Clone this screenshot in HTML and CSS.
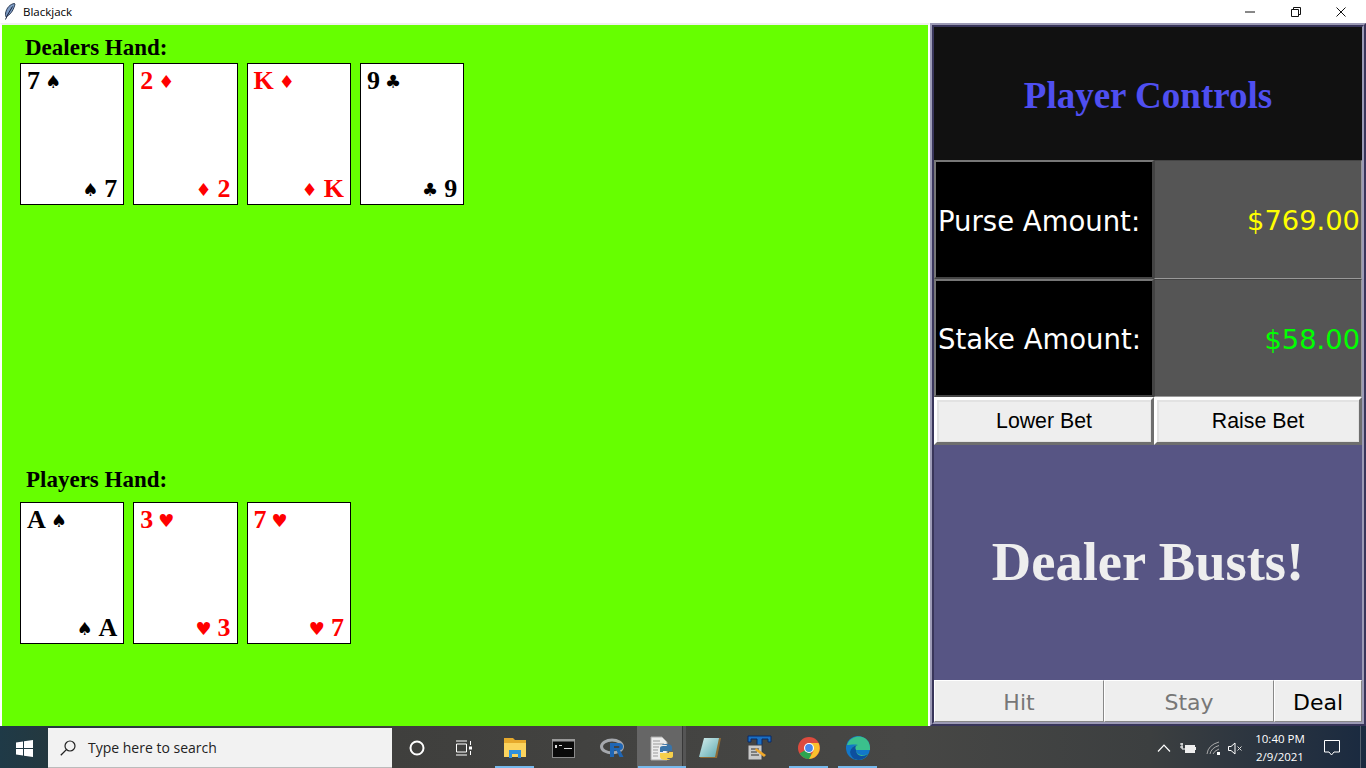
FILE: index.html
```html
<!DOCTYPE html>
<html lang="en">
<head>
<meta charset="utf-8">
<title>Blackjack</title>
<link rel="stylesheet" href="styles.css">
</head>
<body>
<div class="desktop">
  <header class="titlebar">
    <svg class="feather" width="12" height="17" viewBox="0 0 12 17"><path d="M10.500 .5C6 1 2.500 5 1.600 10c-.3 2 0 3.200.6 4l1.800-1.500C7 11 10 6 11 1z" fill="#7d9cc4" stroke="#1c2a44" stroke-width=".9"/><path d="M8.500 3.500 3.500 12 1.500 16.500" fill="none" stroke="#16203a" stroke-width="1"/></svg>
    <span class="title">Blackjack</span>
    <div class="winctl">
      <span class="ctl"><svg width="10" height="10" viewBox="0 0 10 10"><path d="M0 5h10" stroke="#111" fill="none"/></svg></span>
      <span class="ctl"><svg width="10" height="10" viewBox="0 0 10 10"><path d="M.5 2.500h7v7h-7zM2.500 2.500v-2h7v7h-2" stroke="#111" fill="none"/></svg></span>
      <span class="ctl"><svg width="10" height="10" viewBox="0 0 10 10"><path d="M.5 .5l9 9M9.500 .5l-9 9" stroke="#111" fill="none"/></svg></span>
    </div>
  </header>
  <main class="main">
    <section class="board">
      <div class="hand dealer">
        <h2 class="hand-label dealer-label">Dealers Hand:</h2>
        <div class="cards">
          <div class="card"><div class="corner top"><span class="rank">7</span><span class="suit">♠</span></div><div class="corner bottom"><span class="suit">♠</span><span class="rank">7</span></div></div>
          <div class="card red"><div class="corner top"><span class="rank">2</span><span class="suit">♦</span></div><div class="corner bottom"><span class="suit">♦</span><span class="rank">2</span></div></div>
          <div class="card red"><div class="corner top"><span class="rank">K</span><span class="suit">♦</span></div><div class="corner bottom"><span class="suit">♦</span><span class="rank">K</span></div></div>
          <div class="card"><div class="corner top"><span class="rank">9</span><span class="suit">♣</span></div><div class="corner bottom"><span class="suit">♣</span><span class="rank">9</span></div></div>
        </div>
      </div>
      <div class="hand player">
        <h2 class="hand-label player-label">Players Hand:</h2>
        <div class="cards">
          <div class="card"><div class="corner top"><span class="rank">A</span><span class="suit">♠</span></div><div class="corner bottom"><span class="suit">♠</span><span class="rank">A</span></div></div>
          <div class="card red"><div class="corner top"><span class="rank">3</span><span class="suit">♥</span></div><div class="corner bottom"><span class="suit">♥</span><span class="rank">3</span></div></div>
          <div class="card red"><div class="corner top"><span class="rank">7</span><span class="suit">♥</span></div><div class="corner bottom"><span class="suit">♥</span><span class="rank">7</span></div></div>
        </div>
      </div>
    </section>
    <aside class="panel">
      <div class="panel-inner">
        <h1 class="controls-title">Player Controls</h1>
        <div class="stat-row purse-row">
          <div class="stat-label">Purse Amount:</div>
          <div class="stat-value yellow">$769.00</div>
        </div>
        <div class="stat-row stake-row">
          <div class="stat-label">Stake Amount:</div>
          <div class="stat-value green">$58.00</div>
        </div>
        <div class="bet-row">
          <button class="bet-btn" type="button">Lower Bet</button>
          <button class="bet-btn" type="button">Raise Bet</button>
        </div>
        <div class="message">Dealer Busts!</div>
        <div class="play-row">
          <button class="play-btn wide off" type="button">Hit</button>
          <button class="play-btn wide off" type="button">Stay</button>
          <button class="play-btn deal" type="button">Deal</button>
        </div>
      </div>
    </aside>
  </main>
  <footer class="taskbar">
    <div class="start"><svg width="17" height="17" viewBox="0 0 17 17"><path d="M0 2.400 7 1.400V8H0zM8 1.300 17 0V8H8zM0 9h7v6.600L0 14.600zM8 9h9v8L8 15.700z" fill="#fff"/></svg></div>
    <div class="search">
      <svg width="16" height="16" viewBox="0 0 16 16"><circle cx="10" cy="6" r="5" fill="none" stroke="#222" stroke-width="1.200"/><path d="M6.400 9.600 .8 15.200" stroke="#222" stroke-width="1.300"/></svg>
      <span class="search-text">Type here to search</span>
    </div>
    <div class="apps">
      <div class="slot"><svg width="16" height="16" viewBox="0 0 16 16"><circle cx="8" cy="8" r="6.500" fill="none" stroke="#fff" stroke-width="2"/></svg></div>
      <div class="slot shift-left"><svg width="17" height="16" viewBox="0 0 17 16"><path d="M1 1h11M1 15h11M1.500 4h10v8h-10zM15.500 1v4M15.500 11v4" fill="none" stroke="#fff"/><rect x="14" y="6.500" width="3" height="3" fill="#fff"/></svg></div>
      <div class="slot running"><svg width="22" height="20" viewBox="0 0 22 20"><path d="M0 0h9l2 2h11v4H0z" fill="#e6a92c"/><path d="M0 5h22v14H0z" fill="#fbd35d"/><path d="M5 20v-8h12v8h-3v-4H8v4z" fill="#2f8fdc"/></svg></div>
      <div class="slot"><svg width="23" height="19" viewBox="0 0 23 19"><rect x=".5" y=".5" width="22" height="18" fill="#0a0a0a" stroke="#8a8a8a"/><path d="M0 0h23v2.500H0z" fill="#9a9a9a"/><path d="M3 6h2v3H3zM7 6h3v1H7zM12 9h8v1h-8z" fill="#ddd"/></svg></div>
      <div class="slot"><svg width="25" height="20" viewBox="0 0 25 20"><ellipse cx="12" cy="8.500" rx="10.500" ry="6.500" fill="none" stroke="#a5a8ad" stroke-width="3"/><path d="M10 5h9q4 0 4 3.500t-3 3.500l3.500 7h-4L16.500 12.500H14V19h-4zM14 8v2h4.500q1 0 1-1t-1-1z" fill="#1f66b5"/></svg></div>
      <div class="slot active running"><svg width="24" height="25" viewBox="0 0 24 25"><path d="M1 1h11l5 5v18H1z" fill="#ececec" stroke="#aaa"/><path d="M3 5h7M3 8h11M3 11h6M3 14h5M3 17h5M3 20h5" stroke="#999"/><path d="M16 8q6 0 6 3v4h-9v1h-3v-4q0-2 3-2h4v-1h-5q0-1 4-1z" fill="#3a74a8"/><path d="M16 24q-6 0-6-3v-4h9v-1h4v4q0 2-3 2h-3v1h3q0 1-4 1z" fill="#f6cf4a"/></svg></div>
      <div class="slot"><svg width="23" height="22" viewBox="0 0 23 22"><defs><linearGradient id="pad" x1="0" y1="0" x2="1" y2="1"><stop offset="0" stop-color="#d5efee"/><stop offset="1" stop-color="#5fa9b0"/></linearGradient></defs><path d="M6 1h16l-4 20H1z" fill="#8f6a35"/><path d="M5 1h15l-4 19H0z" fill="url(#pad)"/></svg></div>
      <div class="slot"><svg width="25" height="26" viewBox="0 0 25 26"><path d="M1 1h23v6h-3V4h-6v14h-5V4H4v3H1z" fill="#1a6fc4" stroke="#0b2a66"/><rect x="1" y="10" width="14" height="15" fill="#c9c9c9" stroke="#444"/><path d="M4 14h8M4 17h6M4 20h8" stroke="#333"/><path d="M9 13l10 7-2 2-9-7z" fill="#f0a82a"/></svg></div>
      <div class="slot running"><svg width="22" height="22" viewBox="0 0 22 22"><circle cx="11" cy="11" r="11" fill="#dd4b3e"/><path d="M11 11 1.500 16.500A11 11 0 0 0 14 21.600z" fill="#2ea44f"/><path d="M11 6h9.500A11 11 0 0 1 11 22l4.500-8z" fill="#fbc02d"/><circle cx="11" cy="11" r="5" fill="#fff"/><circle cx="11" cy="11" r="3.900" fill="#4a86e8"/></svg></div>
      <div class="slot running"><svg width="24" height="24" viewBox="0 0 24 24"><circle cx="12" cy="12" r="12" fill="#1277c9"/><path d="M1 9C3 2 10 0 14 .5 20 1 24 6 24 12v2H10q0 4 5 5 4 .5 7-1-3 6-10 6c-6-1-8-6-7-10 .5-3 4-5 7-5-4-1-8 0-11 0z" fill="#3bc08c"/><path d="M10 14q0 5 5.500 6 3.500 0 6.500-2-3 6-10 6-7-1-8-8 1-6 8-7-4 1-2 5z" fill="#0d4f9e"/></svg></div>
    </div>
    <div class="tray">
      <svg class="tray-ico chev" width="14" height="8" viewBox="0 0 14 8"><path d="M1 7.500 7 1.200l6 6.300" fill="none" stroke="#fff" stroke-width="1.200"/></svg>
      <svg class="tray-ico batt" width="16" height="10" viewBox="0 0 16 10"><path d="M0 1h3M0 4h3M2 0v6h3" fill="none" stroke="#fff"/><rect x="5" y="2" width="10" height="8" fill="#eee"/><path d="M15 4h1v3h-1z" fill="#eee"/></svg>
      <svg class="tray-ico wifi" width="15" height="14" viewBox="0 0 15 14"><path d="M1 13Q2 4 13 1M4 13q1-6 9-8.500M7 13q1-3 6-5" fill="none" stroke="#aaa"/><rect x="11" y="11" width="3" height="3" fill="#fff"/></svg>
      <svg class="tray-ico vol" width="15" height="13" viewBox="0 0 15 13"><path d="M.5 4.500h2.500L7 1v11L3 8.500H.5z" fill="none" stroke="#fff"/><path d="M9.500 4.500l4 4M13.500 4.500l-4 4" stroke="#ddd" fill="none"/></svg>
      <div class="clock"><span>10:40 PM</span><span>2/9/2021</span></div>
      <svg class="tray-ico notif" width="16" height="16" viewBox="0 0 16 16"><path d="M.5 .5h15v11.500H10L7.500 15 5 12H.5z" fill="none" stroke="#fff"/></svg>
      <span class="show-desktop"></span>
    </div>
  </footer>
</div>
</body>
</html>
```

FILE: styles.css
```css
* { box-sizing: border-box; }
html, body { margin: 0; padding: 0; }
body { width: 1366px; height: 768px; overflow: hidden; background: #fff; font-family: "DejaVu Sans", sans-serif; }
.desktop { width: 1366px; height: 768px; display: flex; flex-direction: column; }

.titlebar { height: 23px; flex: none; display: flex; align-items: center; background: #fff; padding-left: 4px; }
.feather { flex: none; margin-top: -1px; }
.title { margin-left: 7px; font: 11.500px/16px "Open Sans", "Noto Sans", sans-serif; color: #000; }
.winctl { margin-left: auto; margin-right: 2px; display: flex; }
.ctl { width: 45.500px; height: 22px; display: flex; align-items: center; justify-content: center; }

.main { height: 703px; flex: none; display: flex; }
.board { width: 930px; flex: none; border-left: 2px solid #fff; border-right: 2px solid #fff; border-top: 2px solid #f0f0f0; background: #66ff00; padding-left: 18px; }
.hand { display: flex; flex-direction: column; }
.dealer { height: 180px; padding-top: 11px; }
.player { margin-top: 263px; height: 190px; }
.hand-label { margin: 0 0 0 5px; font: bold 23px/24px "Liberation Serif", serif; color: #000; }
.dealer-label { height: 27px; }
.player-label { height: 34px; padding-left: 1px; }
.cards { display: flex; gap: 9px; }
.card { width: 104.300px; height: 142px; border: 1px solid #000; background: #fff; color: #000; display: flex; flex-direction: column; justify-content: space-between; padding: 4px 6px 2px 6px; }
.card.red { color: #f00; }
.corner { display: flex; align-items: center; gap: 5px; height: 26px; }
.corner.bottom { justify-content: flex-end; gap: 6px; }
.rank { font: bold 26px/26px "Liberation Serif", serif; }
.suit { font: 18px/26px "DejaVu Sans", sans-serif; padding-top: 2px; }

.panel { width: 436px; flex: none; border: 2px solid; border-color: #9c9ab5 #38355a #38355a #9c9ab5; }
.panel-inner { height: 100%; border: 2px solid; border-color: #38355a #9c9ab5 #9c9ab5 #38355a; display: flex; flex-direction: column; background: #575584; }
.controls-title { margin: 0; height: 133px; flex: none; background: #111; color: #4f4ff0; display: flex; align-items: center; justify-content: center; padding-top: 4px; font: bold 37px/40px "Liberation Serif", serif; }
.stat-row { flex: none; display: grid; grid-template-columns: 220px 208px; }
.purse-row { height: 119px; }
.stake-row { height: 118px; }
.stat-label { background: #000; color: #fff; border: 2px solid; border-color: #777 #444 #444 #777; display: flex; align-items: center; padding: 2px 0 0 2px; font-size: 27.500px; white-space: nowrap; }
.stat-value { background: #555; border: 1px solid; border-color: #444 #999 #999 #444; display: flex; align-items: center; justify-content: flex-end; padding: 2px 1px 0 0; font-size: 27.300px; }
.yellow { color: #ff0; }
.green { color: #0f0; }

.bet-row { flex: none; height: 48px; display: grid; grid-template-columns: 220px 208px; background: #eee; }
.bet-btn { background: #eee; color: #000; border: 3px solid; border-color: #fff #6e6e6e #6e6e6e #fff; box-shadow: inset 2px 2px 0 #e2e2e2, inset -1px -1px 0 #e2e2e2; font: 21.300px "Liberation Sans", sans-serif; padding: 0; }
.message { flex: 1; display: flex; align-items: center; justify-content: center; background: #575584; color: #eee; font: bold 54.500px/56px "Liberation Serif", serif; padding-bottom: 1px; }
.play-row { flex: none; height: 42px; display: grid; grid-template-columns: 170px 170px 88px; background: #eee; }
.play-btn { background: #eee; border: 1px solid; border-color: #fff #888 #888 #fff; font: 22px "DejaVu Sans", sans-serif; padding: 2px 0 0; color: #000; }
.play-btn.off { color: #777; }

.taskbar { height: 42px; flex: none; display: flex; align-items: stretch; background: linear-gradient(90deg, #1f3a47 0, #24383f 48px, #3f3f3d 392px, #474745 900px, #3c3f40 1150px, #1a2a40 1366px); }
.start { width: 48px; flex: none; display: flex; align-items: center; justify-content: center; padding-top: 2px; }
.search { width: 344px; flex: none; display: flex; align-items: center; background: #f2f2f2; border-bottom: 1px solid #bbb; margin-top: 2px; padding-left: 12px; gap: 12px; }
.search-text { font: 14px/20px "Open Sans", "Noto Sans", sans-serif; color: #222; }
.apps { display: flex; flex: none; }
.slot { width: 49px; height: 42px; display: flex; align-items: center; justify-content: center; position: relative; padding-top: 2px; }
.slot.shift-left { padding-right: 4px; }
.slot.active { background: linear-gradient(90deg, #666 0, #666 45px, #383838 45px, #383838 46px, #555 46px); }
.slot.running::after { content: ""; position: absolute; left: 5px; right: 5px; bottom: 0; height: 2px; background: #76b9ed; }
.slot.active.running::after { left: 1px; right: 0; }
.tray { flex: 1; display: flex; align-items: center; position: relative; padding: 2px 0 0 275px; }
.tray-ico { flex: none; }
.batt { margin-left: 9px; }
.wifi { margin-left: 10px; }
.vol { margin-left: 7px; }
.clock { flex: none; width: 72px; margin-left: 1px; display: flex; flex-direction: column; align-items: center; font: 11.500px/18px "Open Sans", "Noto Sans", sans-serif; color: #fff; }
.notif { margin-left: 8px; }
.show-desktop { position: absolute; right: 5px; top: 0; bottom: 0; width: 1px; background: #55606e; }
```
